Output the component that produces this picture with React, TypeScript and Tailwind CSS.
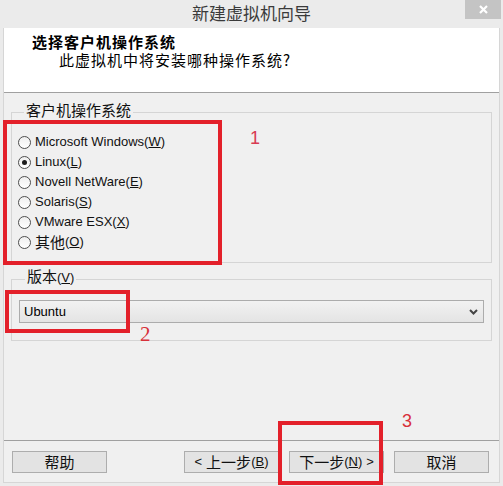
import React from "react";

const cjk = { fontFamily: '"Noto Sans CJK SC", "Liberation Sans", sans-serif' };
const ui = { fontFamily: '"Liberation Sans", "Noto Sans CJK SC", sans-serif' };

const osList = [
  { label: "Microsoft Windows", key: "W" },
  { label: "Linux", key: "L", checked: true },
  { label: "Novell NetWare", key: "E" },
  { label: "Solaris", key: "S" },
  { label: "VMware ESX", key: "X" },
  { label: "其他", key: "O", cjk: true },
];

const Radio = ({ checked }: { checked?: boolean }) => (
  <span className="w-[13px] h-[13px] rounded-full border border-[#4d4d4d] bg-gradient-to-b from-[#eeeeee] to-white flex items-center justify-center">
    {checked && <span className="w-[5px] h-[5px] rounded-full bg-[#1c1c1c]" />}
  </span>
);

const Btn = ({ children }: { children: React.ReactNode }) => (
  <button className="w-[95px] h-[22px] border border-[#adadad] bg-[#e3e3e3] flex items-center justify-center text-[15px] text-[#111]" style={cjk}>
    {children}
  </button>
);

export default function App() {
  return (
    <div className="relative w-[503px] h-[486px] bg-[#ebebeb] flex flex-col overflow-hidden">
      {/* title bar */}
      <div className="h-[28px] flex items-center justify-center pb-[2px] text-[17px] text-[#3a3a3a]" style={cjk}>
        新建虚拟机向导
      </div>
      <div className="absolute top-0 left-[465px] w-[36px] h-[19px] bg-[#c4c4c4] flex items-center justify-center">
        <svg width="9" height="9" viewBox="0 0 9 9">
          <path d="M1 1 L8 8 M8 1 L1 8" stroke="#fff" strokeWidth="2.2" />
        </svg>
      </div>

      <div className="mx-[3px] mb-[3px] flex-1 flex flex-col border-x border-b border-[#d6d6d6]">
        {/* header */}
        <div className="h-[65px] bg-white border-b border-[#a0a0a0] pt-[6px] flex flex-col" style={cjk}>
          <div className="h-[17px] flex items-center pl-[28px] text-[15px] font-bold tracking-[1px] text-black">选择客户机操作系统</div>
          <div className="h-[18px] flex items-center pl-[55px] text-[15px] tracking-[1px] text-black">此虚拟机中将安装哪种操作系统?</div>
        </div>

        {/* body */}
        <div className="flex-1 bg-[#f0f0f0] px-[7px] pt-[11px] flex flex-col gap-[7px]">
          <fieldset className="border border-[#d5d5d5] pl-[6px] pt-[12px] pb-[10px]">
            <legend className="ml-[6px] px-[2px] text-[15px] leading-[16px] text-[#111]" style={cjk}>
              <span className="block -translate-y-[2px]">客户机操作系统</span>
            </legend>
            {osList.map((o) => (
              <div key={o.key} className="h-[20px] flex items-center gap-[4px] text-[13px] text-[#111]" style={ui}>
                <Radio checked={o.checked} />
                <span className={o.cjk ? "text-[15px]" : ""} style={o.cjk ? cjk : ui}>
                  {o.label}
                </span>
                <span className="-ml-[4px]">
                  (<span className="underline">{o.key}</span>)
                </span>
              </div>
            ))}
          </fieldset>

          <fieldset className="border border-[#d5d5d5] px-[7px] pt-[12px] pb-[17px]">
            <legend className="ml-[6px] px-[2px] text-[15px] leading-[16px] text-[#111]" style={cjk}>
              <span className="block -translate-y-[2px]">
                版本<span className="text-[13px]" style={ui}>(<span className="underline">V</span>)</span>
              </span>
            </legend>
            <div className="h-[23px] border border-[#acacac] bg-gradient-to-b from-[#f2f2f2] to-[#e4e4e4] flex items-center justify-between pl-[4px] pr-[5px]">
              <span className="text-[13px] text-black" style={ui}>Ubuntu</span>
              <svg width="9" height="6" viewBox="0 0 9 6">
                <path d="M1 1 L4.5 4.5 L8 1" stroke="#444" strokeWidth="2" fill="none" />
              </svg>
            </div>
          </fieldset>
        </div>

        {/* footer */}
        <div className="h-[42px] bg-[#f0f0f0] border-t border-[#a0a0a0] pt-[10px] pl-[8px] pr-[10px] flex items-start">
          <Btn>帮助</Btn>
          <div className="ml-auto flex gap-[10px]">
            <Btn>
              <span className="text-[13px] mr-[4px]" style={ui}>&lt;</span>上一步
              <span className="text-[13px]" style={ui}>(<span className="underline">B</span>)</span>
            </Btn>
            <Btn>
              下一步<span className="text-[13px]" style={ui}>(<span className="underline">N</span>)</span>
              <span className="text-[13px] ml-[4px]" style={ui}>&gt;</span>
            </Btn>
            <Btn>取消</Btn>
          </div>
        </div>
      </div>

      {/* annotations */}
      <div className="absolute left-[3px] top-[120px] w-[219px] h-[145px] border-[4px] border-[#e3202a]" />
      <div className="absolute left-[5px] top-[290px] w-[125px] h-[43px] border-[4px] border-[#e3202a]" />
      <div className="absolute left-[278px] top-[421px] w-[105px] h-[64px] border-[4px] border-[#e3202a]" />
      <div className="absolute left-[250px] top-[128px] text-[18px] leading-[20px] text-[#d83a52]" style={ui}>1</div>
      <div className="absolute left-[140px] top-[323px] text-[21px] leading-[22px] text-[#d8303a]" style={{ fontFamily: '"Liberation Serif", serif' }}>2</div>
      <div className="absolute left-[402px] top-[411px] text-[18px] leading-[20px] text-[#d8303a]" style={ui}>3</div>
    </div>
  );
}
